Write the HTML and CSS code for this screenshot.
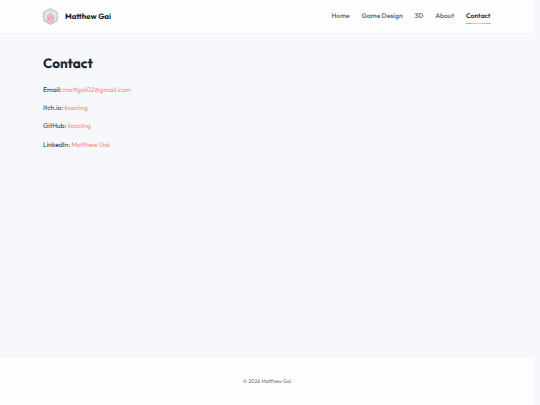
FILE: index.html
```html
<!DOCTYPE html>
<html lang="en">
<head>
  <meta charset="UTF-8" />
  <title>Contact - Matthew Gai</title>
  <link rel="stylesheet" href="styles.css">
</head>
<body>
  <div class="page">
    <header class="site-header">
      <a class="brand" href="#">
        <svg class="logo" viewBox="0 0 30 34">
          <path d="M15 1 L28.5 8.5 V25.5 L15 33 L1.5 25.5 V8.5 Z" fill="#dcebf2" stroke="#93a5b0" stroke-width="1.4" />
          <path d="M15 3 V10" stroke="#bcd6de" stroke-width="1.2" />
          <path d="M7 15 L11 13 L13 9 L17 9 L18 12 L23 15 V24 L26 26 L19 30 L15 33 L9 29 L4 26 L7 23 Z" fill="#f3b9d0" />
          <path d="M8 15 L15 18 L23 15 M15 18 V31" fill="none" stroke="#eda6c5" stroke-width="1.3" />
          <path d="M11 20 V23 M19 20 V23" stroke="#c47a9e" stroke-width="1.5" />
        </svg>
        <span class="brand-name">Matthew Gai</span>
      </a>
      <nav class="nav">
        <a href="#">Home</a>
        <a href="#">Game Design</a>
        <a href="#">3D</a>
        <a href="#">About</a>
        <a class="active" href="#">Contact</a>
      </nav>
    </header>

    <main class="content">
      <h1>Contact</h1>
      <p>Email: <a href="#">mattgai02@gmail.com</a></p>
      <p>Itch.io: <a href="#">koocing</a></p>
      <p>GitHub: <a href="#">koocing</a></p>
      <p>LinkedIn: <a href="#">Matthew Gai</a></p>
    </main>

    <footer class="site-footer">© 2026 Matthew Gai</footer>
  </div>
</body>
</html>
```

FILE: styles.css
```css
* {
  box-sizing: border-box;
}
body {
  margin: 0;
  background: #f7f8fc;
  color: #2d3142;
  font-family: Outfit, Lato, sans-serif;
  font-size: 6.78px;
  text-rendering: geometricPrecision;
}
a {
  text-decoration: none;
}
.page {
  display: flex;
  flex-direction: column;
  width: 534px;
  height: 405px;
}
.site-header {
  display: flex;
  justify-content: space-between;
  height: 33px;
  padding: 0 43.5px 0 43px;
  background: #fefeff;
  box-shadow: 0 0 1px #eef0f6;
}
.brand {
  display: flex;
  align-items: center;
  gap: 7px;
  color: #1a1e2e;
}
.logo {
  width: 15px;
  height: 17px;
}
.brand-name {
  font-size: 7.8px;
  font-weight: 700;
}
.nav {
  display: flex;
  gap: 11.9px;
  padding-top: 8px;
  font-size: 6.75px;
}
.nav a {
  height: 16px;
  line-height: 15px;
  color: #6b7083;
  font-weight: 600;
  white-space: nowrap;
}
.nav .active {
  color: #22263a;
  background: linear-gradient(90deg, #f08a80, #f5cfa5, #7fc9a4) bottom / 100% 1px no-repeat;
}
.content {
  flex: 1;
  padding: 22px 43px 0;
}
h1 {
  margin: 0 0 12.5px;
  color: #1e2233;
  font-size: 13.5px;
  font-weight: 700;
  line-height: 16px;
}
p {
  margin: 0 0 7.4px;
  line-height: 11px;
}
p a {
  color: #f58a7b;
}
.site-footer {
  height: 47.5px;
  padding-top: 1.5px;
  background: #fefeff;
  color: #6b7083;
  font-size: 5.25px;
  line-height: 47px;
  text-align: center;
}
```
